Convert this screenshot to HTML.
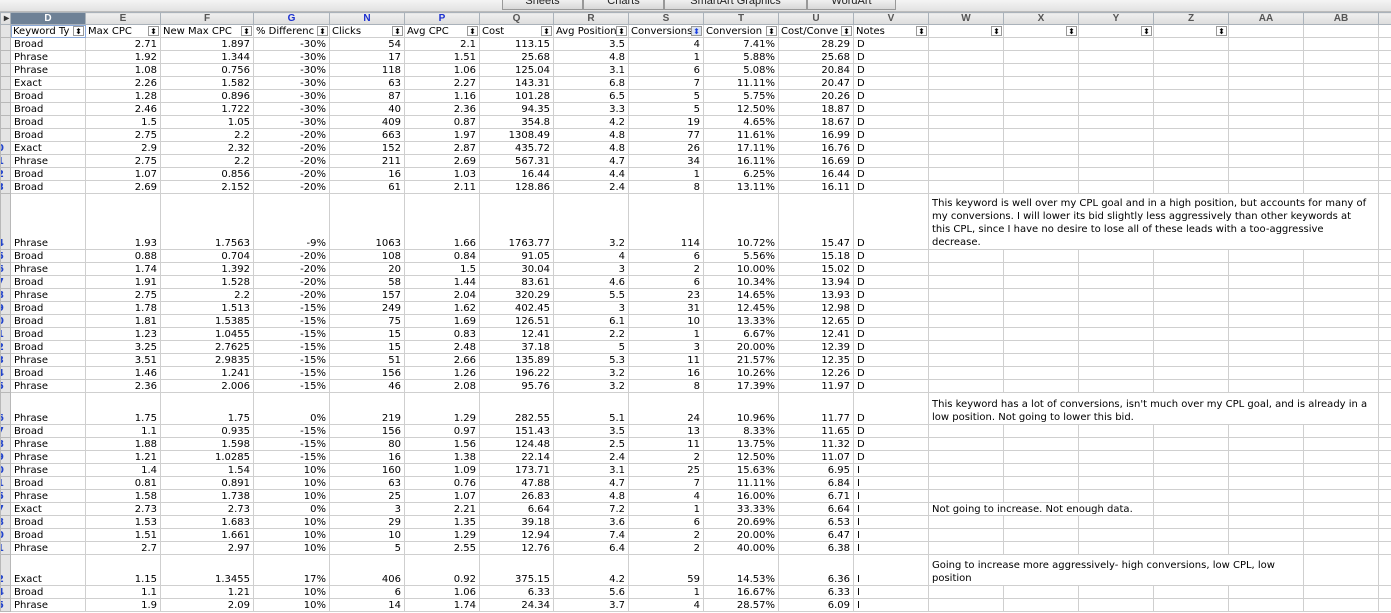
<!DOCTYPE html>
<html><head><meta charset="utf-8"><style>
*{margin:0;padding:0;box-sizing:border-box}
body{width:1391px;height:613px;overflow:hidden;background:#fff;font-family:"DejaVu Sans","Liberation Sans",sans-serif;font-size:10px;color:#111;position:relative}
#tb{position:absolute;left:0;top:0;width:1391px;height:12px;background:linear-gradient(#f4f4f4,#e2e2e2);border-bottom:1px solid #bbb;overflow:hidden}
.tab{position:absolute;top:-2px;height:12px;border:1px solid #999;border-top:none;background:linear-gradient(#f6f6f6,#d8d8d8);text-align:center;font-size:11px;line-height:6px;color:#222;font-family:"Liberation Sans",sans-serif}
table{position:absolute;left:0;top:12px;border-collapse:collapse;table-layout:fixed;width:1391px}
td{border:1px solid #cfcfcf;height:13px;padding:0 3px;text-align:right;white-space:nowrap;overflow:hidden;line-height:11px;vertical-align:bottom;color:#000}
td.l{text-align:left}
td.rh{background:#e4e4e4;border-color:#b8b8b8;padding:0;text-align:left;color:#2244cc;font-weight:bold;font-size:10px}
td.rh span{margin-left:-4px}
tr.h td{height:12px;background:linear-gradient(#f0f0f0,#dcdcdc);border-color:#aab2ba;text-align:center;font-weight:bold;color:#555;font-size:10px;line-height:10px;font-family:"Liberation Sans",sans-serif}
tr.h td.b{color:#1a2fd0}
tr.h td.sel{background:#6e8196;color:#fff}
tr.f td{position:relative;text-align:left;padding-left:2px}
.fb{position:absolute;right:1px;top:1px;width:11px;height:10px;border:1px solid #999;background:#fff;font-size:8px;line-height:9px;text-align:center;color:#000}
td.n{text-align:left;vertical-align:bottom;padding-left:3px;padding-bottom:0;line-height:13px}
</style></head><body>
<div id="tb">
<div class="tab" style="left:502px;width:81px">Sheets</div>
<div class="tab" style="left:583px;width:81px">Charts</div>
<div class="tab" style="left:664px;width:143px">SmartArt Graphics</div>
<div class="tab" style="left:807px;width:89px">WordArt</div>
</div>
<table>
<colgroup><col style="width:10px"><col style="width:75px"><col style="width:75px"><col style="width:93px"><col style="width:76px"><col style="width:75px"><col style="width:75px"><col style="width:74px"><col style="width:75px"><col style="width:75px"><col style="width:75px"><col style="width:75px"><col style="width:75px"><col style="width:75px"><col style="width:75px"><col style="width:75px"><col style="width:75px"><col style="width:75px"><col style="width:75px"><col style="width:13px"></colgroup>
<tr class="h"><td style="color:#333">▸</td><td class="sel">D</td><td>E</td><td>F</td><td class="b">G</td><td class="b">N</td><td class="b">P</td><td>Q</td><td>R</td><td>S</td><td>T</td><td>U</td><td>V</td><td>W</td><td>X</td><td>Y</td><td>Z</td><td>AA</td><td>AB</td><td></td></tr>
<tr class="f"><td class="rh"></td><td style="outline:1px solid #8aa8d8;outline-offset:-1px">Keyword Ty<span class="fb">⬍</span></td><td>Max CPC<span class="fb">⬍</span></td><td>New Max CPC<span class="fb">⬍</span></td><td>% Differenc<span class="fb">⬍</span></td><td>Clicks<span class="fb">⬍</span></td><td>Avg CPC<span class="fb">⬍</span></td><td>Cost<span class="fb">⬍</span></td><td>Avg Position<span class="fb">⬍</span></td><td>Conversions<span class="fb" style="color:#1a3ee0;background:#dde4f0">⬍</span></td><td>Conversion <span class="fb">⬍</span></td><td>Cost/Conve<span class="fb">⬍</span></td><td>Notes<span class="fb">⬍</span></td><td><span class="fb">⬍</span></td><td><span class="fb">⬍</span></td><td><span class="fb">⬍</span></td><td><span class="fb">⬍</span></td><td></td><td></td><td></td></tr>
<tr><td class="rh"></td><td class="l">Broad</td><td>2.71</td><td>1.897</td><td>-30%</td><td>54</td><td>2.1</td><td>113.15</td><td>3.5</td><td>4</td><td>7.41%</td><td>28.29</td><td class="l">D</td><td></td><td></td><td></td><td></td><td></td><td></td><td></td></tr>
<tr><td class="rh"></td><td class="l">Phrase</td><td>1.92</td><td>1.344</td><td>-30%</td><td>17</td><td>1.51</td><td>25.68</td><td>4.8</td><td>1</td><td>5.88%</td><td>25.68</td><td class="l">D</td><td></td><td></td><td></td><td></td><td></td><td></td><td></td></tr>
<tr><td class="rh"></td><td class="l">Phrase</td><td>1.08</td><td>0.756</td><td>-30%</td><td>118</td><td>1.06</td><td>125.04</td><td>3.1</td><td>6</td><td>5.08%</td><td>20.84</td><td class="l">D</td><td></td><td></td><td></td><td></td><td></td><td></td><td></td></tr>
<tr><td class="rh"></td><td class="l">Exact</td><td>2.26</td><td>1.582</td><td>-30%</td><td>63</td><td>2.27</td><td>143.31</td><td>6.8</td><td>7</td><td>11.11%</td><td>20.47</td><td class="l">D</td><td></td><td></td><td></td><td></td><td></td><td></td><td></td></tr>
<tr><td class="rh"></td><td class="l">Broad</td><td>1.28</td><td>0.896</td><td>-30%</td><td>87</td><td>1.16</td><td>101.28</td><td>6.5</td><td>5</td><td>5.75%</td><td>20.26</td><td class="l">D</td><td></td><td></td><td></td><td></td><td></td><td></td><td></td></tr>
<tr><td class="rh"></td><td class="l">Broad</td><td>2.46</td><td>1.722</td><td>-30%</td><td>40</td><td>2.36</td><td>94.35</td><td>3.3</td><td>5</td><td>12.50%</td><td>18.87</td><td class="l">D</td><td></td><td></td><td></td><td></td><td></td><td></td><td></td></tr>
<tr><td class="rh"></td><td class="l">Broad</td><td>1.5</td><td>1.05</td><td>-30%</td><td>409</td><td>0.87</td><td>354.8</td><td>4.2</td><td>19</td><td>4.65%</td><td>18.67</td><td class="l">D</td><td></td><td></td><td></td><td></td><td></td><td></td><td></td></tr>
<tr><td class="rh"></td><td class="l">Broad</td><td>2.75</td><td>2.2</td><td>-20%</td><td>663</td><td>1.97</td><td>1308.49</td><td>4.8</td><td>77</td><td>11.61%</td><td>16.99</td><td class="l">D</td><td></td><td></td><td></td><td></td><td></td><td></td><td></td></tr>
<tr><td class="rh"><span>0</span></td><td class="l">Exact</td><td>2.9</td><td>2.32</td><td>-20%</td><td>152</td><td>2.87</td><td>435.72</td><td>4.8</td><td>26</td><td>17.11%</td><td>16.76</td><td class="l">D</td><td></td><td></td><td></td><td></td><td></td><td></td><td></td></tr>
<tr><td class="rh"><span>1</span></td><td class="l">Phrase</td><td>2.75</td><td>2.2</td><td>-20%</td><td>211</td><td>2.69</td><td>567.31</td><td>4.7</td><td>34</td><td>16.11%</td><td>16.69</td><td class="l">D</td><td></td><td></td><td></td><td></td><td></td><td></td><td></td></tr>
<tr><td class="rh"><span>2</span></td><td class="l">Broad</td><td>1.07</td><td>0.856</td><td>-20%</td><td>16</td><td>1.03</td><td>16.44</td><td>4.4</td><td>1</td><td>6.25%</td><td>16.44</td><td class="l">D</td><td></td><td></td><td></td><td></td><td></td><td></td><td></td></tr>
<tr><td class="rh"><span>3</span></td><td class="l">Broad</td><td>2.69</td><td>2.152</td><td>-20%</td><td>61</td><td>2.11</td><td>128.86</td><td>2.4</td><td>8</td><td>13.11%</td><td>16.11</td><td class="l">D</td><td></td><td></td><td></td><td></td><td></td><td></td><td></td></tr>
<tr style="height:56px"><td class="rh"><span>4</span></td><td class="l">Phrase</td><td>1.93</td><td>1.7563</td><td>-9%</td><td>1063</td><td>1.66</td><td>1763.77</td><td>3.2</td><td>114</td><td>10.72%</td><td>15.47</td><td class="l">D</td><td colspan="6" class="n">This keyword is well over my CPL goal and in a high position, but accounts for many of<br>my conversions. I will lower its bid slightly less aggressively than other keywords at<br>this CPL, since I have no desire to lose all of these leads with a too-aggressive<br>decrease.</td><td></td></tr>
<tr><td class="rh"><span>5</span></td><td class="l">Broad</td><td>0.88</td><td>0.704</td><td>-20%</td><td>108</td><td>0.84</td><td>91.05</td><td>4</td><td>6</td><td>5.56%</td><td>15.18</td><td class="l">D</td><td></td><td></td><td></td><td></td><td></td><td></td><td></td></tr>
<tr><td class="rh"><span>6</span></td><td class="l">Phrase</td><td>1.74</td><td>1.392</td><td>-20%</td><td>20</td><td>1.5</td><td>30.04</td><td>3</td><td>2</td><td>10.00%</td><td>15.02</td><td class="l">D</td><td></td><td></td><td></td><td></td><td></td><td></td><td></td></tr>
<tr><td class="rh"><span>7</span></td><td class="l">Broad</td><td>1.91</td><td>1.528</td><td>-20%</td><td>58</td><td>1.44</td><td>83.61</td><td>4.6</td><td>6</td><td>10.34%</td><td>13.94</td><td class="l">D</td><td></td><td></td><td></td><td></td><td></td><td></td><td></td></tr>
<tr><td class="rh"><span>8</span></td><td class="l">Phrase</td><td>2.75</td><td>2.2</td><td>-20%</td><td>157</td><td>2.04</td><td>320.29</td><td>5.5</td><td>23</td><td>14.65%</td><td>13.93</td><td class="l">D</td><td></td><td></td><td></td><td></td><td></td><td></td><td></td></tr>
<tr><td class="rh"><span>9</span></td><td class="l">Broad</td><td>1.78</td><td>1.513</td><td>-15%</td><td>249</td><td>1.62</td><td>402.45</td><td>3</td><td>31</td><td>12.45%</td><td>12.98</td><td class="l">D</td><td></td><td></td><td></td><td></td><td></td><td></td><td></td></tr>
<tr><td class="rh"><span>0</span></td><td class="l">Broad</td><td>1.81</td><td>1.5385</td><td>-15%</td><td>75</td><td>1.69</td><td>126.51</td><td>6.1</td><td>10</td><td>13.33%</td><td>12.65</td><td class="l">D</td><td></td><td></td><td></td><td></td><td></td><td></td><td></td></tr>
<tr><td class="rh"><span>1</span></td><td class="l">Broad</td><td>1.23</td><td>1.0455</td><td>-15%</td><td>15</td><td>0.83</td><td>12.41</td><td>2.2</td><td>1</td><td>6.67%</td><td>12.41</td><td class="l">D</td><td></td><td></td><td></td><td></td><td></td><td></td><td></td></tr>
<tr><td class="rh"><span>2</span></td><td class="l">Broad</td><td>3.25</td><td>2.7625</td><td>-15%</td><td>15</td><td>2.48</td><td>37.18</td><td>5</td><td>3</td><td>20.00%</td><td>12.39</td><td class="l">D</td><td></td><td></td><td></td><td></td><td></td><td></td><td></td></tr>
<tr><td class="rh"><span>3</span></td><td class="l">Phrase</td><td>3.51</td><td>2.9835</td><td>-15%</td><td>51</td><td>2.66</td><td>135.89</td><td>5.3</td><td>11</td><td>21.57%</td><td>12.35</td><td class="l">D</td><td></td><td></td><td></td><td></td><td></td><td></td><td></td></tr>
<tr><td class="rh"><span>4</span></td><td class="l">Broad</td><td>1.46</td><td>1.241</td><td>-15%</td><td>156</td><td>1.26</td><td>196.22</td><td>3.2</td><td>16</td><td>10.26%</td><td>12.26</td><td class="l">D</td><td></td><td></td><td></td><td></td><td></td><td></td><td></td></tr>
<tr><td class="rh"><span>5</span></td><td class="l">Phrase</td><td>2.36</td><td>2.006</td><td>-15%</td><td>46</td><td>2.08</td><td>95.76</td><td>3.2</td><td>8</td><td>17.39%</td><td>11.97</td><td class="l">D</td><td></td><td></td><td></td><td></td><td></td><td></td><td></td></tr>
<tr style="height:32px"><td class="rh"><span>6</span></td><td class="l">Phrase</td><td>1.75</td><td>1.75</td><td>0%</td><td>219</td><td>1.29</td><td>282.55</td><td>5.1</td><td>24</td><td>10.96%</td><td>11.77</td><td class="l">D</td><td colspan="6" class="n">This keyword has a lot of conversions, isn't much over my CPL goal, and is already in a<br>low position. Not going to lower this bid.</td><td></td></tr>
<tr><td class="rh"><span>7</span></td><td class="l">Broad</td><td>1.1</td><td>0.935</td><td>-15%</td><td>156</td><td>0.97</td><td>151.43</td><td>3.5</td><td>13</td><td>8.33%</td><td>11.65</td><td class="l">D</td><td></td><td></td><td></td><td></td><td></td><td></td><td></td></tr>
<tr><td class="rh"><span>8</span></td><td class="l">Phrase</td><td>1.88</td><td>1.598</td><td>-15%</td><td>80</td><td>1.56</td><td>124.48</td><td>2.5</td><td>11</td><td>13.75%</td><td>11.32</td><td class="l">D</td><td></td><td></td><td></td><td></td><td></td><td></td><td></td></tr>
<tr><td class="rh"><span>9</span></td><td class="l">Phrase</td><td>1.21</td><td>1.0285</td><td>-15%</td><td>16</td><td>1.38</td><td>22.14</td><td>2.4</td><td>2</td><td>12.50%</td><td>11.07</td><td class="l">D</td><td></td><td></td><td></td><td></td><td></td><td></td><td></td></tr>
<tr><td class="rh"><span>0</span></td><td class="l">Phrase</td><td>1.4</td><td>1.54</td><td>10%</td><td>160</td><td>1.09</td><td>173.71</td><td>3.1</td><td>25</td><td>15.63%</td><td>6.95</td><td class="l">I</td><td></td><td></td><td></td><td></td><td></td><td></td><td></td></tr>
<tr><td class="rh"><span>1</span></td><td class="l">Broad</td><td>0.81</td><td>0.891</td><td>10%</td><td>63</td><td>0.76</td><td>47.88</td><td>4.7</td><td>7</td><td>11.11%</td><td>6.84</td><td class="l">I</td><td></td><td></td><td></td><td></td><td></td><td></td><td></td></tr>
<tr><td class="rh"><span>5</span></td><td class="l">Phrase</td><td>1.58</td><td>1.738</td><td>10%</td><td>25</td><td>1.07</td><td>26.83</td><td>4.8</td><td>4</td><td>16.00%</td><td>6.71</td><td class="l">I</td><td></td><td></td><td></td><td></td><td></td><td></td><td></td></tr>
<tr><td class="rh"><span>7</span></td><td class="l">Exact</td><td>2.73</td><td>2.73</td><td>0%</td><td>3</td><td>2.21</td><td>6.64</td><td>7.2</td><td>1</td><td>33.33%</td><td>6.64</td><td class="l">I</td><td colspan="3" class="n" style="line-height:11px">Not going to increase. Not enough data.</td><td></td><td></td><td></td><td></td></tr>
<tr><td class="rh"><span>8</span></td><td class="l">Broad</td><td>1.53</td><td>1.683</td><td>10%</td><td>29</td><td>1.35</td><td>39.18</td><td>3.6</td><td>6</td><td>20.69%</td><td>6.53</td><td class="l">I</td><td></td><td></td><td></td><td></td><td></td><td></td><td></td></tr>
<tr><td class="rh"><span>0</span></td><td class="l">Broad</td><td>1.51</td><td>1.661</td><td>10%</td><td>10</td><td>1.29</td><td>12.94</td><td>7.4</td><td>2</td><td>20.00%</td><td>6.47</td><td class="l">I</td><td></td><td></td><td></td><td></td><td></td><td></td><td></td></tr>
<tr><td class="rh"><span>1</span></td><td class="l">Phrase</td><td>2.7</td><td>2.97</td><td>10%</td><td>5</td><td>2.55</td><td>12.76</td><td>6.4</td><td>2</td><td>40.00%</td><td>6.38</td><td class="l">I</td><td></td><td></td><td></td><td></td><td></td><td></td><td></td></tr>
<tr style="height:31px"><td class="rh"><span>2</span></td><td class="l">Exact</td><td>1.15</td><td>1.3455</td><td>17%</td><td>406</td><td>0.92</td><td>375.15</td><td>4.2</td><td>59</td><td>14.53%</td><td>6.36</td><td class="l">I</td><td colspan="5" class="n">Going to increase more aggressively- high conversions, low CPL, low<br>position</td><td></td><td></td></tr>
<tr><td class="rh"><span>4</span></td><td class="l">Broad</td><td>1.1</td><td>1.21</td><td>10%</td><td>6</td><td>1.06</td><td>6.33</td><td>5.6</td><td>1</td><td>16.67%</td><td>6.33</td><td class="l">I</td><td></td><td></td><td></td><td></td><td></td><td></td><td></td></tr>
<tr><td class="rh"><span>5</span></td><td class="l">Phrase</td><td>1.9</td><td>2.09</td><td>10%</td><td>14</td><td>1.74</td><td>24.34</td><td>3.7</td><td>4</td><td>28.57%</td><td>6.09</td><td class="l">I</td><td></td><td></td><td></td><td></td><td></td><td></td><td></td></tr>
</table>
</body></html>
